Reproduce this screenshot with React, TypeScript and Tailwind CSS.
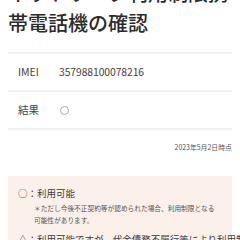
export default function App() {
  const rows = [
    { label: 'IMEI', value: '357988100078216' },
    { label: '結果', value: null },
  ]

  return (
    <div
      className="w-[240px] h-[240px] overflow-hidden bg-white px-2 text-[#333]"
      style={{ fontFamily: '"Noto Sans CJK JP", "Noto Sans", sans-serif' }}
    >
      <h1 className="-mt-[22px] text-[20px] leading-[30px] font-medium text-[#2b2b2b]">
        ネットワーク利用制限携帯電話機の確認
      </h1>

      <div className="mt-[14px] border-t-2 border-[#f1f1f1]">
        {rows.map((row) => (
          <div
            key={row.label}
            className="flex items-center h-[38px] border-b-2 border-[#f1f1f1] pl-[10px] text-[10.5px] text-[#444]"
          >
            <span className="w-[41px]">{row.label}</span>
            {row.value ? (
              <span className="text-[10.4px] tracking-[-0.1px]">{row.value}</span>
            ) : (
              <span className="ml-px w-[9px] h-[9px] rounded-full border border-[#aaa]" />
            )}
          </div>
        ))}
      </div>

      <p className="mt-[12px] text-right text-[6.9px] leading-[10px] text-[#555]">2023年5月2日時点</p>

      <div className="mt-[24px] bg-[#fcf1ea] pl-[10px] pr-2 pt-[10px] pb-4 text-[#3a3a3a]">
        <p className="text-[9.5px] leading-[14px]">○：利用可能</p>
        <p className="ml-[16px] w-[184px] mt-[2px] text-[6.7px] leading-[12px] text-[#555]">
          ＊ただし今後不正契約等が認められた場合、利用制限となる可能性があります。
        </p>
        <p className="mt-[6px] text-[9.5px] leading-[14px] whitespace-nowrap">
          △：利用可能ですが、代金債務不履行等により利用制限となる可能性があります。
        </p>
      </div>
    </div>
  )
}
